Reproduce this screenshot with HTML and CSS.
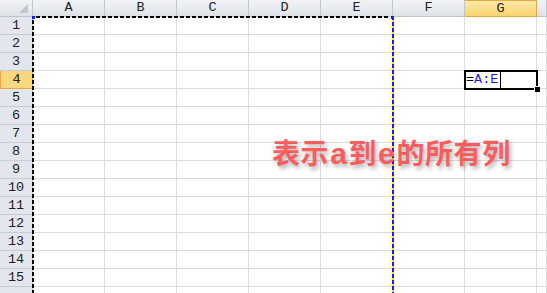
FILE: index.html
```html
<!DOCTYPE html>
<html lang="zh-CN">
  <head>
    <meta charset="UTF-8" />
    <title>Sheet1</title>
    <link rel="stylesheet" href="styles.css">
  </head>
  <body>
    <div class="sheet">
      <!-- Column headers -->
      <div class="corner"></div>
      <div class="col-head">A</div><div class="col-head">B</div><div class="col-head">C</div><div class="col-head">D</div><div class="col-head">E</div><div class="col-head">F</div><div class="col-head selected">G</div><div class="col-head"></div>

      <!-- Rows -->
      <div class="row-head">1</div><div class="cell"></div><div class="cell"></div><div class="cell"></div><div class="cell"></div><div class="cell"></div><div class="cell"></div><div class="cell"></div><div class="cell"></div>
      <div class="row-head">2</div><div class="cell"></div><div class="cell"></div><div class="cell"></div><div class="cell"></div><div class="cell"></div><div class="cell"></div><div class="cell"></div><div class="cell"></div>
      <div class="row-head">3</div><div class="cell"></div><div class="cell"></div><div class="cell"></div><div class="cell"></div><div class="cell"></div><div class="cell"></div><div class="cell"></div><div class="cell"></div>
      <div class="row-head selected">4</div><div class="cell"></div><div class="cell"></div><div class="cell"></div><div class="cell"></div><div class="cell"></div><div class="cell"></div><div class="cell active"><span class="eq">=</span><span class="ref">A:E</span><span class="caret"></span></div><div class="cell"></div>
      <div class="row-head">5</div><div class="cell"></div><div class="cell"></div><div class="cell"></div><div class="cell"></div><div class="cell"></div><div class="cell"></div><div class="cell"></div><div class="cell"></div>
      <div class="row-head">6</div><div class="cell"></div><div class="cell"></div><div class="cell"></div><div class="cell"></div><div class="cell"></div><div class="cell"></div><div class="cell"></div><div class="cell"></div>
      <div class="row-head">7</div><div class="cell"></div><div class="cell"></div><div class="cell"></div><div class="cell"></div><div class="cell"></div><div class="cell"></div><div class="cell"></div><div class="cell"></div>
      <div class="row-head">8</div><div class="cell"></div><div class="cell"></div><div class="cell"></div><div class="cell"></div><div class="cell"></div><div class="cell"></div><div class="cell"></div><div class="cell"></div>
      <div class="row-head">9</div><div class="cell"></div><div class="cell"></div><div class="cell"></div><div class="cell"></div><div class="cell"></div><div class="cell"></div><div class="cell"></div><div class="cell"></div>
      <div class="row-head">10</div><div class="cell"></div><div class="cell"></div><div class="cell"></div><div class="cell"></div><div class="cell"></div><div class="cell"></div><div class="cell"></div><div class="cell"></div>
      <div class="row-head">11</div><div class="cell"></div><div class="cell"></div><div class="cell"></div><div class="cell"></div><div class="cell"></div><div class="cell"></div><div class="cell"></div><div class="cell"></div>
      <div class="row-head">12</div><div class="cell"></div><div class="cell"></div><div class="cell"></div><div class="cell"></div><div class="cell"></div><div class="cell"></div><div class="cell"></div><div class="cell"></div>
      <div class="row-head">13</div><div class="cell"></div><div class="cell"></div><div class="cell"></div><div class="cell"></div><div class="cell"></div><div class="cell"></div><div class="cell"></div><div class="cell"></div>
      <div class="row-head">14</div><div class="cell"></div><div class="cell"></div><div class="cell"></div><div class="cell"></div><div class="cell"></div><div class="cell"></div><div class="cell"></div><div class="cell"></div>
      <div class="row-head">15</div><div class="cell"></div><div class="cell"></div><div class="cell"></div><div class="cell"></div><div class="cell"></div><div class="cell"></div><div class="cell"></div><div class="cell"></div>
      <div class="row-head"></div><div class="cell"></div><div class="cell"></div><div class="cell"></div><div class="cell"></div><div class="cell"></div><div class="cell"></div><div class="cell"></div><div class="cell"></div>

      <!-- Copy range A:E (marching ants) -->
      <div class="copy-range"></div>

      <!-- Annotation -->
      <div class="note">表示<span class="latin">a</span>到<span class="latin">e</span>的所有列</div>
    </div>
  </body>
</html>
```

FILE: styles.css
```css
/* General Styles */
body {
  margin: 0;
  background: #fff;
  overflow: hidden;
}

.sheet {
  position: relative;
  display: grid;
  grid-template-columns: 33px repeat(7, 72px) 1fr;
  grid-template-rows: 17px repeat(16, 18px);
  font-family: "Liberation Mono", monospace;
  font-size: 13.5px;
  color: #222;
}

/* Headers */
.corner,
.col-head,
.row-head {
  box-sizing: border-box;
  background: linear-gradient(#f1f3f6, #dfe3e8);
  border-right: 1px solid #bfc5cc;
  border-bottom: 1px solid #bfc5cc;
  display: flex;
  align-items: center;
  justify-content: center;
  line-height: 1;
}

.row-head {
  background: #e3e7ed;
  border-bottom-color: #c7cdd4;
}

.corner {
  position: relative;
}

.corner::after {
  content: "";
  position: absolute;
  right: 4px;
  bottom: 3px;
  border-left: 9px solid transparent;
  border-bottom: 9px solid #c0c6cd;
}

.col-head.selected {
  background: linear-gradient(#fdeaa6, #f8d470);
  border: 1px solid #eca645;
  border-left: none;
}

.row-head.selected {
  background: #f9d77b;
  border: 1px solid #eca645;
  border-top: none;
}

/* Cells */
.cell {
  box-sizing: border-box;
  border-right: 1px solid #dadcdd;
  border-bottom: 1px solid #dadcdd;
  display: flex;
  align-items: center;
  padding-left: 1px;
}

.cell.active {
  position: relative;
  outline: 2px solid #000;
  outline-offset: -1px;
  z-index: 2;
}

.cell.active::after {
  content: "";
  position: absolute;
  right: -4px;
  bottom: -4px;
  width: 5px;
  height: 5px;
  background: #000;
  border-top: 1px solid #fff;
  border-left: 1px solid #fff;
}

.eq {
  color: #000;
}

.ref {
  color: #1a1aff;
}

.caret {
  width: 1px;
  height: 17px;
  margin-left: 2px;
  background: #000;
}

/* Marching ants around A:E */
.copy-range {
  position: absolute;
  left: 32px;
  top: 16px;
  width: 362px;
  bottom: 0;
  background:
    repeating-linear-gradient(90deg, #000 0 4px, transparent 4px 6px) 4px 0 / calc(100% - 10px) 2px no-repeat,
    repeating-linear-gradient(180deg, #000 0 4px, transparent 4px 6px) 0 4px / 2px 100% no-repeat,
    repeating-linear-gradient(180deg, #1a1aff 0 4px, #ffe100 4px 6px) 100% 0 / 2px 100% no-repeat;
  pointer-events: none;
  z-index: 1;
}

.copy-range::before,
.copy-range::after {
  content: "";
  position: absolute;
  top: 0;
  width: 3px;
  height: 3px;
  background: #1a1aff;
}

.copy-range::before {
  left: 0;
}

.copy-range::after {
  right: 0;
}

/* Annotation text */
.note {
  position: absolute;
  left: 272px;
  top: 138px;
  font-family: "Noto Sans CJK SC", sans-serif;
  font-weight: 700;
  font-size: 28px;
  line-height: 28px;
  letter-spacing: 0.6px;
  color: #fa5d5d;
  text-shadow: 2px 3px 4px rgba(0, 0, 0, 0.3);
  white-space: nowrap;
  z-index: 3;
}

.note .latin {
  font-family: "Liberation Sans", sans-serif;
  font-weight: 700;
  font-size: 30px;
  margin: 0 1px;
}
```
